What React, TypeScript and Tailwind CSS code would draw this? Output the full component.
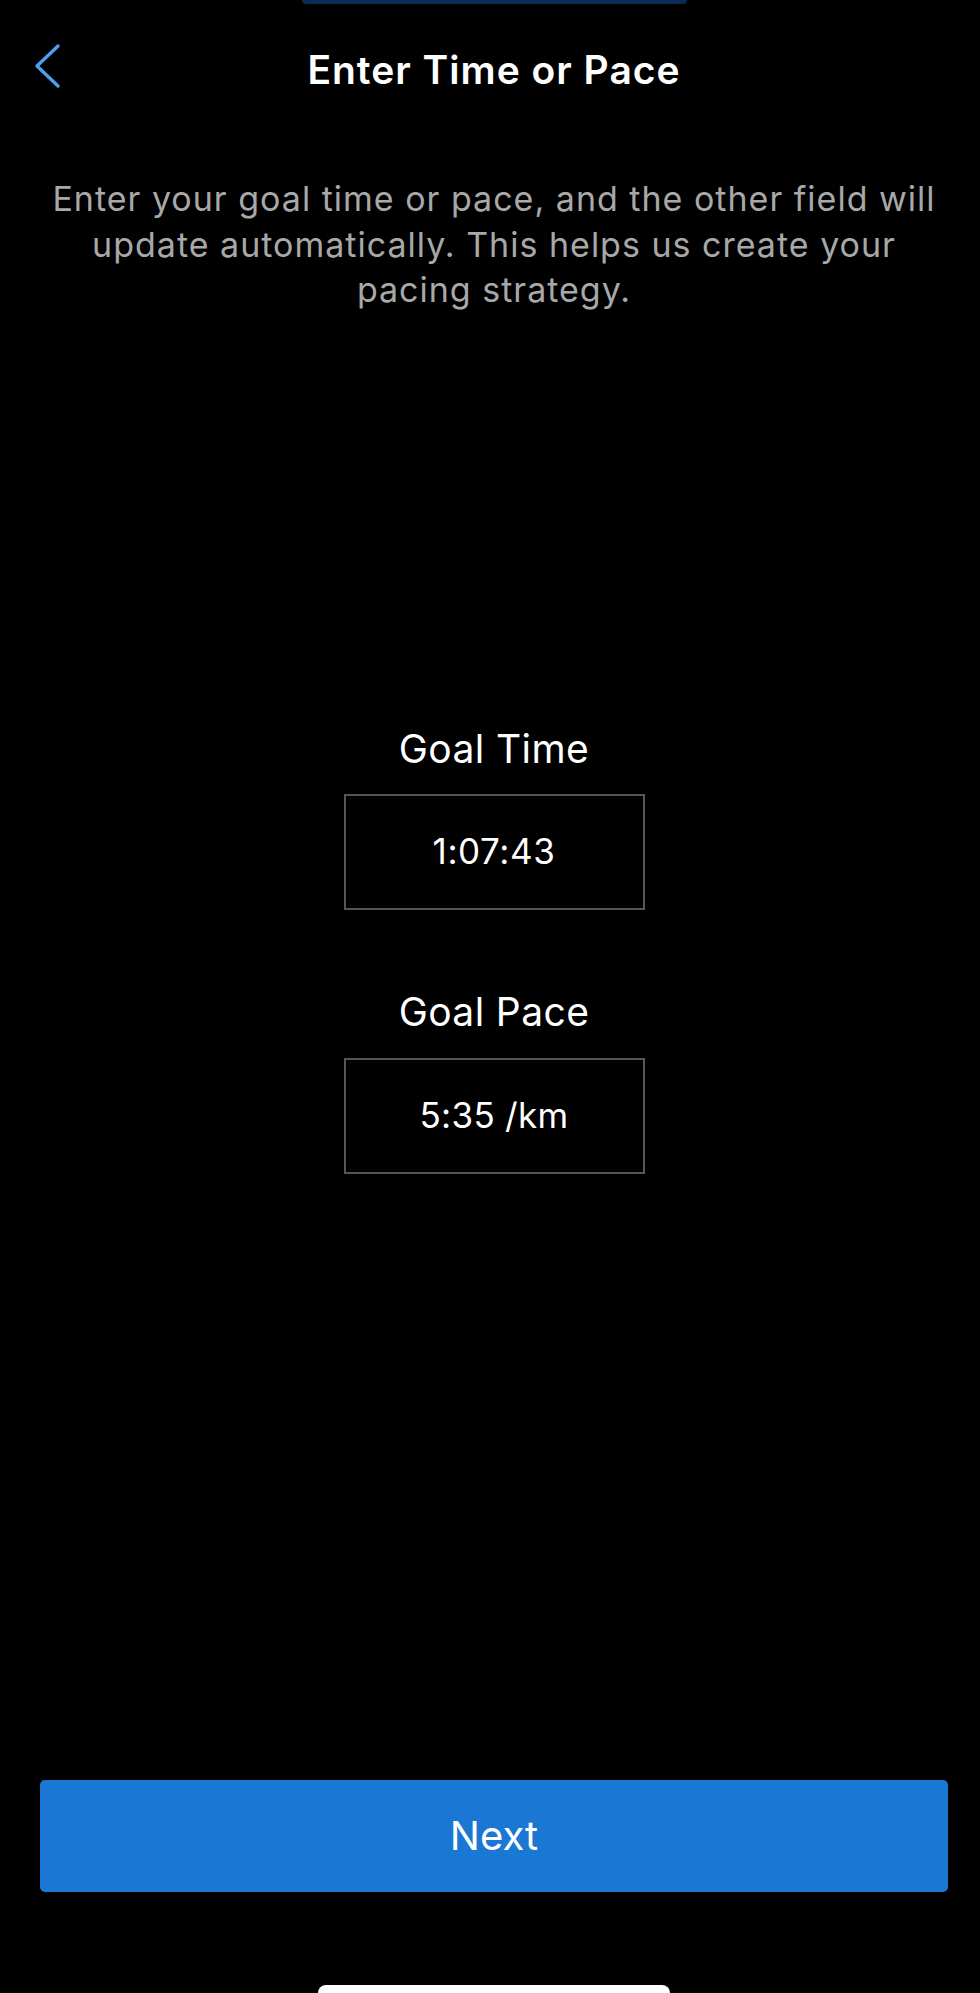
import React from "react";

const font = { fontFamily: '"Inter", "Liberation Sans", sans-serif' };

export default function App() {
  return (
    <div
      className="w-[980px] h-[1993px] bg-black overflow-hidden flex flex-col pl-[8px] text-white"
      style={font}
    >
      {/* top edge pill */}
      <div className="flex justify-center">
        <div className="h-[4px] w-[385px] rounded-b-[14px] bg-[#0b2b57]" />
      </div>

      {/* header */}
      <div className="h-[132px] grid grid-cols-[1fr_auto_1fr] items-center">
        <div className="pl-[26px] mb-[8px]">
          <svg width="28" height="46" viewBox="0 0 28 46" fill="none">
            <polyline
              points="24,3 3,23 24,43"
              stroke="#4a9ff0"
              strokeWidth="3.4"
              strokeLinecap="round"
              strokeLinejoin="round"
            />
          </svg>
        </div>
        <h1 className="text-[39px] font-semibold tracking-[1px] leading-none">
          Enter Time or Pace
        </h1>
        <div />
      </div>

      {/* description */}
      <p className="mt-[41px] px-[36px] text-center text-[34px] tracking-[1px] leading-[45.5px] text-[#a8a8a8]">
        Enter your goal time or pace, and the other field will update
        automatically. This helps us create your pacing strategy.
      </p>

      {/* fields */}
      <div className="mt-[413px] flex flex-col items-center">
        <div className="text-[39px] tracking-[0.4px] leading-[46px]">Goal Time</div>
        <div className="mt-[22px] w-[301px] h-[116px] border-2 border-[#565656] flex items-center justify-center">
          <span className="text-[35px] tracking-[0.6px] leading-none">1:07:43</span>
        </div>

        <div className="mt-[79px] text-[39px] tracking-[0.4px] leading-[46px]">Goal Pace</div>
        <div className="mt-[23px] w-[301px] h-[116px] border-2 border-[#565656] flex items-center justify-center">
          <span className="text-[35px] tracking-[0.3px] leading-none">5:35 /km</span>
        </div>
      </div>

      {/* button */}
      <button className="mt-[606px] mx-[32px] h-[113px] rounded-[5px] bg-[#1a77d3] text-white text-[40px] flex items-center justify-center">
        Next
      </button>

      {/* home indicator */}
      <div className="mt-[93px] flex justify-center">
        <div className="h-[8px] w-[352px] rounded-t-full bg-white" />
      </div>
    </div>
  );
}
